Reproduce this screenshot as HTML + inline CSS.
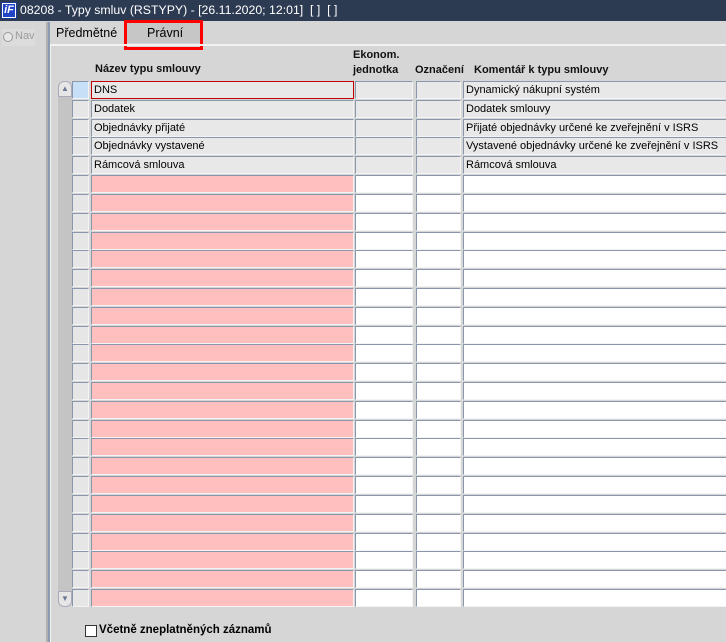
<!DOCTYPE html><html><head><style>
body{margin:0;width:726px;height:642px;background:#d6d6d6;font-family:"Liberation Sans",sans-serif;position:relative;overflow:hidden}
.a{position:absolute}
.f{position:absolute;box-sizing:border-box;height:18px;border:1px solid #8a97ab;border-right-color:#f4f4f4;border-bottom-color:#f4f4f4;font-size:11px;line-height:17px;padding-left:2px;white-space:nowrap;overflow:hidden;color:#000}
.h{position:absolute;font-size:11px;font-weight:bold;color:#111}
</style></head><body>
<div class="a" style="left:0;top:0;width:726px;height:21px;background:#2c3a52"></div>
<div class="a" style="left:1px;top:2px;width:16px;height:17px;background:#fff;border:1px solid #1a3a9a;box-sizing:border-box"><div style="position:absolute;left:1px;top:1px;width:12px;height:13px;background:#1f44c8;color:#fff;font:bold italic 11px 'Liberation Sans';line-height:13px;text-align:center">iF</div></div>
<div class="a" style="left:20px;top:3px;color:#fff;font-size:12.3px">08208 - Typy smluv (RSTYPY) - [26.11.2020; 12:01]&nbsp; [ ]&nbsp; [ ]</div>
<div class="a" style="left:2px;top:29px;width:33px;height:17px;background:#dcdcdc"></div>
<div class="a" style="left:3px;top:32px;width:8px;height:8px;border-radius:50%;border:1px solid #999;background:#e8e8e8"></div>
<div class="a" style="left:15px;top:30px;font-size:11px;color:#9a9a9a">Nav</div>
<div class="a" style="left:46px;top:22px;width:2px;height:620px;background:#b0b0b0"></div>
<div class="a" style="left:48px;top:22px;width:76px;height:22px;background:#d6d6d6;border-left:2px solid #8d9bb0;box-sizing:border-box"></div>
<div class="a" style="left:56px;top:26px;font-size:12.5px">Předmětné</div>
<div class="a" style="left:125px;top:22px;width:76px;height:21px;background:#c6c6c6"></div>
<div class="a" style="left:147px;top:26px;font-size:12.5px">Právní</div>
<div class="a" style="left:124px;top:20px;width:79px;height:30px;border:3px solid #f00;box-sizing:border-box"></div>
<div class="a" style="left:48px;top:44px;width:678px;height:2px;background:#f2f2f2"></div>
<div class="a" style="left:48px;top:44px;width:2px;height:598px;background:#8d9bb0"></div>
<div class="a" style="left:50px;top:46px;width:1px;height:596px;background:#f2f2f2"></div>
<div class="h" style="left:95px;top:63px">Název typu smlouvy</div>
<div class="h" style="left:353px;top:49px">Ekonom.</div>
<div class="h" style="left:353px;top:64px">jednotka</div>
<div class="h" style="left:415px;top:64px">Označení</div>
<div class="h" style="left:474px;top:64px">Komentář k typu smlouvy</div>
<div class="a" style="left:58px;top:81px;width:14px;height:526px;background:#c4c4c4;border-radius:7px"></div>
<div class="a" style="left:58px;top:81px;width:14px;height:16px;background:#e6e6e6;border-radius:6px 6px 0 0;border:1px solid #aab;box-sizing:border-box;font-size:8px;color:#6a7890;text-align:center;line-height:14px">▲</div>
<div class="a" style="left:58px;top:591px;width:14px;height:16px;background:#e6e6e6;border-radius:0 0 6px 6px;border:1px solid #aab;box-sizing:border-box;font-size:8px;color:#6a7890;text-align:center;line-height:14px">▼</div>
<div id="rows"></div>
<div class="a" style="left:85px;top:625px;width:12px;height:12px;border:1px solid #333;background:#fff;box-sizing:border-box"></div>
<div class="a" style="left:99px;top:624px;font-size:11.5px;font-weight:bold">Včetně zneplatněných záznamů</div>
<script>
var d=[["DNS","Dynamický nákupní systém"],["Dodatek","Dodatek smlouvy"],["Objednávky přijaté","Přijaté objednávky určené ke zveřejnění v ISRS"],["Objednávky vystavené","Vystavené objednávky určené ke zveřejnění v ISRS"],["Rámcová smlouva","Rámcová smlouva"]];
var h="";for(var i=0;i<28;i++){var t=Math.round(81+i*18.815);var e=i<5;
h+='<div class="f" style="left:72px;top:'+t+'px;width:17px;background:'+(i==0?'#c7e0f8':'#e6e6e6')+'"></div>';
h+='<div class="f" style="left:91px;top:'+t+'px;width:263px;background:'+(e?'#e8e8e8':'#ffbfbf')+(i==0?';border:1px solid #c00000':'')+'">'+(e?d[i][0]:'')+'</div>';
h+='<div class="f" style="left:355px;top:'+t+'px;width:58px;background:'+(e?'#e8e8e8':'#fff')+'"></div>';
h+='<div class="f" style="left:416px;top:'+t+'px;width:45px;background:'+(e?'#e8e8e8':'#fff')+'"></div>';
h+='<div class="f" style="left:463px;top:'+t+'px;width:270px;background:'+(e?'#e8e8e8':'#fff')+'">'+(e?d[i][1]:'')+'</div>';}
document.getElementById("rows").innerHTML=h;
</script>
</body></html>
